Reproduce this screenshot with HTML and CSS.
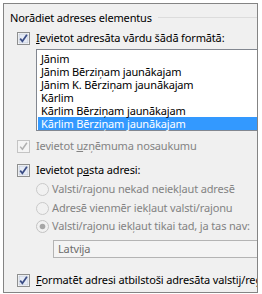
FILE: index.html
```html
<!doctype html>
<html>
<head>
	<meta charset="utf-8">
	<title>Norādiet adreses elementus</title>
	<link rel="stylesheet" href="styles.css">
</head>
<body>
<div class="frame">
	<div class="group-title"><span>Norādiet adreses elementus</span><span class="rule"></span></div>

	<div class="check-row row-name">
		<svg class="box" width="13" height="13" viewBox="0 0 13 13"><rect x="0.5" y="0.5" width="12" height="12" fill="#fff" stroke="#8e8f8f"/><rect x="2" y="2" width="9" height="9" fill="#e6ebf5" stroke="#b4bccb" stroke-width="0.6"/><path d="M3.2 6.6 L5.4 9.3 L9.9 2.8" fill="none" stroke="#3b4d85" stroke-width="1.7"/></svg>
		<span><u>I</u>evietot adresāta vārdu šādā formātā:</span>
	</div>

	<ul class="listbox">
		<li>Jānim</li>
		<li>Jānim Bērziņam jaunākajam</li>
		<li>Jānim K. Bērziņam jaunākajam</li>
		<li>Kārlim</li>
		<li>Kārlim Bērziņam jaunākajam</li>
		<li class="selected">Kārlim Bērziņam jaunākajam</li>
	</ul>

	<div class="check-row row-company disabled">
		<svg class="box" width="13" height="13" viewBox="0 0 13 13"><rect x="0.5" y="0.5" width="12" height="12" fill="#f4f4f4" stroke="#c4c4c4"/><path d="M3.2 6.6 L5.4 9.3 L9.9 2.8" fill="none" stroke="#b0b0b0" stroke-width="1.5"/></svg>
		<span>Ievietot <u>u</u>zņēmuma nosaukumu</span>
	</div>

	<div class="check-row row-post">
		<svg class="box" width="13" height="13" viewBox="0 0 13 13"><rect x="0.5" y="0.5" width="12" height="12" fill="#fff" stroke="#8e8f8f"/><rect x="2" y="2" width="9" height="9" fill="#e6ebf5" stroke="#b4bccb" stroke-width="0.6"/><path d="M3.2 6.6 L5.4 9.3 L9.9 2.8" fill="none" stroke="#3b4d85" stroke-width="1.7"/></svg>
		<span>Ievietot p<u>a</u>sta adresi:</span>
	</div>

	<div class="radio-row row-r1 disabled">
		<svg class="radio" width="13" height="13" viewBox="0 0 13 13"><circle cx="6.5" cy="6.5" r="6" fill="#f1f1f1" stroke="#c9c9c9"/></svg>
		<span>Valsti/rajonu nekad neiekļaut adresē</span>
	</div>
	<div class="radio-row row-r2 disabled">
		<svg class="radio" width="13" height="13" viewBox="0 0 13 13"><circle cx="6.5" cy="6.5" r="6" fill="#f1f1f1" stroke="#c9c9c9"/></svg>
		<span>Adresē vienmēr iekļaut valsti/rajonu</span>
	</div>
	<div class="radio-row row-r3 disabled">
		<svg class="radio" width="13" height="13" viewBox="0 0 13 13"><circle cx="6.5" cy="6.5" r="6" fill="#f1f1f1" stroke="#c2c2c2"/><circle cx="6.5" cy="6.5" r="2.8" fill="#a6a6a6"/></svg>
		<span>Valsti/rajonu iekļaut tikai tad, ja tas nav:</span>
	</div>

	<div class="combo">Latvija</div>

	<div class="check-row row-format">
		<svg class="box" width="13" height="13" viewBox="0 0 13 13"><rect x="0.5" y="0.5" width="12" height="12" fill="#fff" stroke="#8e8f8f"/><rect x="2" y="2" width="9" height="9" fill="#e6ebf5" stroke="#b4bccb" stroke-width="0.6"/><path d="M3.2 6.6 L5.4 9.3 L9.9 2.8" fill="none" stroke="#3b4d85" stroke-width="1.7"/></svg>
		<span><u>F</u>ormatēt adresi atbilstoši adresāta valstij/reģionam</span>
	</div>
</div>
</body>
</html>
```

FILE: styles.css
```css
html {
	background: #fff;
}
body {
	margin: 0;
	font-family: 'Noto Sans', sans-serif;
	font-size: 11px;
	letter-spacing: -0.15px;
	color: #000;
}
.frame {
	margin: 3px 0 0 3px;
	width: 253px;
	height: 288px;
	border: 1px solid #848484;
	background: #f0f0f0;
	overflow: hidden;
	white-space: nowrap;
}
.group-title {
	display: flex;
	align-items: center;
	height: 14px;
	margin-top: 6px;
	padding-left: 6px;
}
.rule {
	flex: 1;
	height: 1px;
	margin-left: 6px;
	background: #dcdcdc;
}
.check-row, .radio-row {
	display: flex;
	align-items: center;
	height: 14px;
	line-height: 14px;
}
.check-row {
	margin-left: 13px;
	gap: 6px;
}
.radio-row {
	margin-left: 32px;
	gap: 3px;
}
.box, .radio {
	flex: none;
}
.disabled {
	color: #838383;
}
.row-name { margin-top: 7px; }
.row-company { margin-top: 8px; }
.row-post { margin-top: 10px; }
.row-r1 { margin-top: 5px; }
.row-r2 { margin-top: 5px; }
.row-r3 { margin-top: 4px; }
.row-format { margin-top: 15px; }

.listbox {
	list-style: none;
	margin: 4px 0 0 32px;
	padding: 2px 0 0 1px;
	border: 1px solid #828790;
	border-right: none;
	background: #fff;
}
.listbox li {
	height: 13px;
	line-height: 13px;
	padding-left: 3px;
}
.listbox .selected {
	background: #3399ff;
	color: #fff;
}
.combo {
	margin: 7px 0 0 49px;
	height: 16px;
	line-height: 16px;
	padding-left: 4px;
	border: 1px solid #b4b4b4;
	border-right: none;
	background: #f4f4f4;
	color: #6d6d6d;
}
```
